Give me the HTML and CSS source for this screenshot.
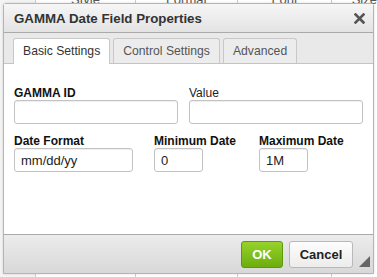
FILE: index.html
```html
<!DOCTYPE html>
<html lang="en">
<head>
<meta charset="UTF-8">
<title>GAMMA Date Field Properties</title>
<link rel="stylesheet" href="styles.css">
</head>
<body>
<!-- grid behind the dialog -->
<div class="sheet">
  <div class="head">
    <span class="c1"></span><span class="c2">Style</span><span class="c3">Format</span><span class="c4">Font</span><span class="c5">Size</span>
  </div>
</div>

<div class="dialog">
  <div class="titlebar">
    <span class="title">GAMMA Date Field Properties</span>
    <svg class="close" width="11" height="11" viewBox="0 0 11 11"><path d="M1.5 1.5L9.5 9.5M9.5 1.5L1.5 9.5" stroke="#555" stroke-width="2.6" stroke-linecap="square"/></svg>
  </div>

  <div class="tabs">
    <div class="tab active">Basic Settings</div>
    <div class="tab">Control Settings</div>
    <div class="tab">Advanced</div>
  </div>

  <div class="panel">
    <div class="row">
      <div class="field f-id">
        <label class="bold">GAMMA ID</label>
        <input type="text">
      </div>
      <div class="field f-val">
        <label>Value</label>
        <input type="text">
      </div>
    </div>
    <div class="row">
      <div class="field f-fmt">
        <label class="bold">Date Format</label>
        <input type="text" value="mm/dd/yy">
      </div>
      <div class="field f-min">
        <label class="bold">Minimum Date</label>
        <input type="text" value="0">
      </div>
      <div class="field f-max">
        <label class="bold">Maximum Date</label>
        <input type="text" value="1M">
      </div>
    </div>
  </div>

  <div class="footer">
    <button class="btn ok">OK</button>
    <button class="btn cancel">Cancel</button>
    <span class="grip"></span>
  </div>
</div>
</body>
</html>
```

FILE: styles.css
```css
body{margin:0;background:#fff;font-family:"Liberation Sans",Arial,sans-serif;color:#222;width:377px;height:277px;overflow:hidden;position:relative}
/* background grid */
.sheet{height:277px}
.head{display:flex;height:4px;font-size:13px;color:#555;line-height:0}
.head span{display:block;border-right:1px solid #ccc;height:277px;box-sizing:border-box;text-align:center}
.head .c1{width:36px;background:#f4f4f4}
.head .c2{width:100px}
.head .c3{width:102px}
.head .c4{width:94px}
.head .c5{width:45px;border-right:none;text-align:right}

/* dialog */
.dialog{position:absolute;left:3px;top:3px;width:371px;height:271px;box-sizing:border-box;
        border:1px solid #b4b4b4;border-radius:3px 3px 0 0;background:#e9e9e9;
        display:flex;flex-direction:column;box-shadow:0 0 3px #0002}
.titlebar{height:28px;flex:none;display:flex;align-items:center;justify-content:space-between;
          padding:0 8px 0 10px;border-bottom:1px solid #aaa;
          background:linear-gradient(#f6f6f6,#e3e3e3)}
.title{font-size:13.3px;font-weight:bold;color:#333}
.close{display:block}

.tabs{flex:none;display:flex;gap:3px;padding:5px 0 0 9px;background:#e9e9e9;border-bottom:1px solid #c4c4c4}
.tab{height:24px;line-height:24px;padding:0 9px;font-size:12.2px;color:#555;
     border:1px solid #c8c8c8;border-bottom:none;border-radius:3px 3px 0 0;background:#ececec;margin-bottom:-1px}
.tab.active{background:#fff;color:#333;height:25px}

.panel{flex:1;background:#fff;padding:22px 10px 0;display:flex;flex-direction:column;gap:10px}
.row{display:flex}
.field{display:flex;flex-direction:column}
.field label{font-size:12px;color:#222;height:14px;line-height:14px}
.field label.bold{font-weight:bold;color:#111}
.field input{height:24px;box-sizing:border-box;border:1px solid #c2c2c2;border-radius:3px;
             font:13px "Liberation Sans",Arial,sans-serif;color:#222;padding:0 6px;
             box-shadow:inset 0 1px 1px #0001;outline:none}
.f-id{width:164px;margin-right:11px}
.f-id input{width:164px}
.f-val input{width:174px}
.f-fmt{width:140px}
.f-fmt input{width:119px}
.f-min{width:105px}
.f-min input,.f-max input{width:49px}

.footer{flex:none;height:38px;border-top:1px solid #aaa;display:flex;align-items:center;justify-content:flex-end;
        gap:6px;padding:0 20px 0 0;position:relative;background:linear-gradient(#ececec,#d8d8d8)}
.btn{height:27px;border-radius:3px;font:bold 13px "Liberation Sans",Arial,sans-serif;padding:0}
.ok{width:42px;color:#fff;border:1px solid #5d9a0b;background:linear-gradient(#96d22a,#6cae0e)}
.cancel{width:64px;color:#222;border:1px solid #b9b9b9;background:linear-gradient(#fdfdfd,#ececec)}
.grip{position:absolute;right:3px;bottom:6px;width:0;height:0;border-left:11px solid transparent;border-bottom:11px solid #666}
```
